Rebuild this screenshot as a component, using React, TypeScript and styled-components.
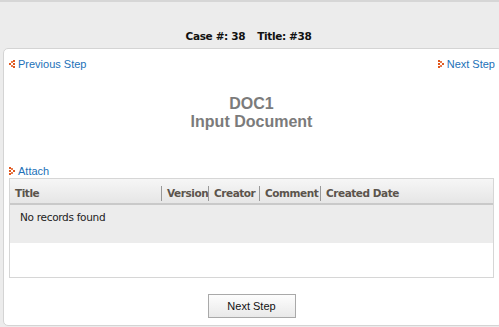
import React from 'react';
import styled, { createGlobalStyle } from 'styled-components';

const GlobalStyle = createGlobalStyle`
  html, body {
    margin: 0;
    padding: 0;
    background: #ececec;
  }
  body {
    font-family: "Liberation Sans", Arial, sans-serif;
  }
`;

const Page = styled.div`
  width: 499px;
  height: 327px;
  box-sizing: border-box;
  border-top: 2px solid #d6d6d6;
  background: #ececec;
  display: flex;
  flex-direction: column;
  overflow: hidden;
`;

const CaseHeader = styled.div`
  height: 46px;
  box-sizing: border-box;
  padding-top: 28px;
  padding-right: 2px;
  text-align: center;
  font-family: "DejaVu Sans", Tahoma, sans-serif;
  font-weight: bold;
  font-size: 10.5px;
  letter-spacing: -0.35px;
  color: #111;
`;

const Gap = styled.span`
  display: inline-block;
  width: 12px;
`;

const Panel = styled.div`
  margin-left: 3px;
  width: 500px;
  height: 278px;
  box-sizing: border-box;
  background: #fff;
  border: 1px solid #d4d4d4;
  border-radius: 5px;
  padding: 8px 4px 0 5px;
  display: flex;
  flex-direction: column;
`;

const NavRow = styled.div`
  display: flex;
  justify-content: space-between;
  height: 14px;
  padding-right: 3px;
`;

const LinkBtn = styled.a`
  display: inline-flex;
  align-items: center;
  gap: 3px;
  font-size: 11px;
  color: #2271b8;
  text-decoration: none;
  cursor: pointer;
`;

const Titles = styled.div`
  margin-top: 24px;
  text-align: center;
  font-weight: bold;
  color: #7b7b7b;
  line-height: 18px;
  padding-right: 4px;
`;

const DocName = styled.div`
  font-size: 16px;
`;

const DocType = styled.div`
  font-size: 16px;
`;

const AttachRow = styled.div`
  margin-top: 30px;
  height: 14px;
`;

const Grid = styled.div`
  margin-top: 3px;
  width: 485px;
  height: 100px;
  box-sizing: border-box;
  border: 1px solid #d6d6d6;
  display: flex;
  flex-direction: column;
`;

const GridHead = styled.div`
  height: 26px;
  box-sizing: border-box;
  padding-top: 5px;
  border-bottom: 2px solid #c9c9c9;
  background: linear-gradient(#f6f6f6, #e6e6e6);
  display: flex;
  align-items: center;
`;

const HeadCell = styled.div<{ $w: number; $sep?: boolean }>`
  width: ${(p) => p.$w}px;
  box-sizing: border-box;
  padding-left: 5px;
  font-family: "DejaVu Sans", Tahoma, sans-serif;
  font-weight: bold;
  font-size: 10.5px;
  letter-spacing: -0.45px;
  color: #5b544c;
  white-space: nowrap;
  overflow: hidden;
  border-right: ${(p) => (p.$sep ? '1px solid #999' : 'none')};
  line-height: 15px;
`;

const EmptyRow = styled.div`
  height: 38px;
  background: #ececec;
  padding: 6px 0 0 10px;
  box-sizing: border-box;
  font-family: "DejaVu Sans", Tahoma, sans-serif;
  font-size: 10.5px;
  letter-spacing: -0.3px;
  color: #222;
`;

const Footer = styled.div`
  display: flex;
  justify-content: center;
  margin-top: 16px;
  padding-right: 4px;
`;

const Button = styled.button`
  width: 88px;
  height: 24px;
  border: 1px solid #a9a9a9;
  background: linear-gradient(#fdfdfd, #e9e9e9);
  font-family: "Liberation Sans", Arial, sans-serif;
  font-size: 11px;
  color: #111;
  padding: 0;
`;

const Arrow: React.FC<{ dir: 'left' | 'right' }> = ({ dir }) => (
  <svg width="6" height="8" viewBox="0 0 6 8">
    <g fill="#e0581e" transform={dir === 'left' ? 'translate(6,0) scale(-1,1)' : undefined}>
      <rect x="0" y="0" width="2" height="2" />
      <rect x="0" y="3" width="2" height="2" />
      <rect x="0" y="6" width="2" height="2" />
      <rect x="2" y="1" width="2" height="2" opacity="0.8" />
      <rect x="2" y="5" width="2" height="2" opacity="0.8" />
      <rect x="4" y="3" width="2" height="2" />
    </g>
  </svg>
);

const columns = [
  { title: 'Title', w: 152 },
  { title: 'Version', w: 47 },
  { title: 'Creator', w: 51 },
  { title: 'Comment', w: 61 },
  { title: 'Created Date', w: 172 },
];

const App: React.FC = () => (
  <>
    <GlobalStyle />
    <Page>
      <CaseHeader>
        Case #: 38<Gap />Title: #38
      </CaseHeader>
      <Panel>
        <NavRow>
          <LinkBtn>
            <Arrow dir="left" />
            Previous Step
          </LinkBtn>
          <LinkBtn>
            <Arrow dir="right" />
            Next Step
          </LinkBtn>
        </NavRow>
        <Titles>
          <DocName>DOC1</DocName>
          <DocType>Input Document</DocType>
        </Titles>
        <AttachRow>
          <LinkBtn>
            <Arrow dir="right" />
            Attach
          </LinkBtn>
        </AttachRow>
        <Grid>
          <GridHead>
            {columns.map((c, i) => (
              <HeadCell key={c.title} $w={c.w} $sep={i < columns.length - 1}>
                {c.title}
              </HeadCell>
            ))}
          </GridHead>
          <EmptyRow>No records found</EmptyRow>
        </Grid>
        <Footer>
          <Button>Next Step</Button>
        </Footer>
      </Panel>
    </Page>
  </>
);

export default App;
